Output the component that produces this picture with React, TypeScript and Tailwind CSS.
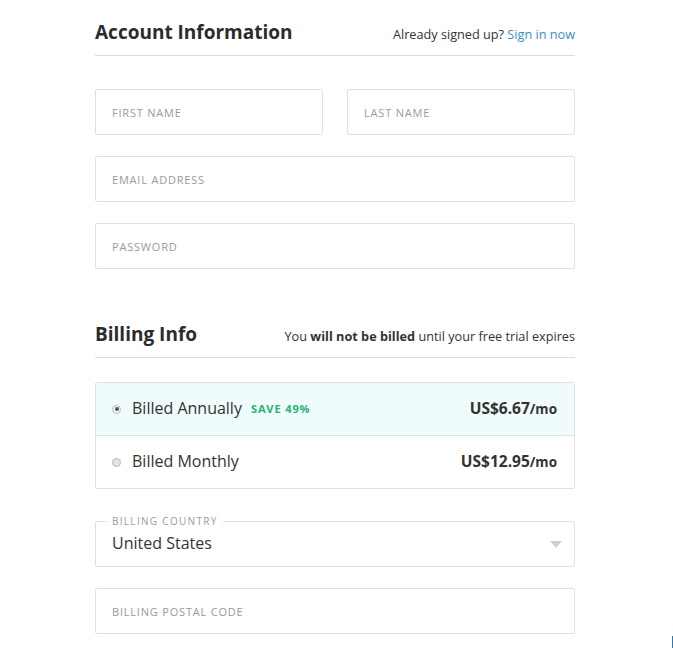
import React from "react";

const font = { fontFamily: '"Open Sans", "Liberation Sans", sans-serif' };

function Field({ label, className = "" }: { label: string; className?: string }) {
  return (
    <div className={`h-[46px] border border-[#e1e1e1] rounded-[2px] flex items-center pl-[16px] pt-[2px] ${className}`}>
      <span className="text-[11px] tracking-[0.8px] text-[#9a9a9a] uppercase">{label}</span>
    </div>
  );
}

function PlanRow({ label, price, save, selected }: { label: string; price: string; save?: string; selected?: boolean }) {
  return (
    <div className={`flex items-center pl-[16px] pr-[17px] ${selected ? "h-[52px] bg-[#f0fbfc]" : "h-[53px] bg-white border-t border-[#e1e1e1]"}`}>
      <span className={`w-[9px] h-[9px] rounded-full border border-[#b8b8b8] flex items-center justify-center ${selected ? "bg-[#f4f4f4]" : "bg-[#e3e3e3]"}`}>
        {selected && <span className="w-[4px] h-[4px] rounded-full bg-[#555]" />}
      </span>
      <span className="ml-[11px] text-[16px] text-[#333] -mt-[2px]">{label}</span>
      {save && <span className="ml-[9px] text-[11px] font-bold tracking-[0.9px] text-[#22b573]">{save}</span>}
      <span className="ml-auto text-[15.5px] font-bold text-[#333]">
        {price}
        <span className="text-[13.5px]">/mo</span>
      </span>
    </div>
  );
}

export default function App() {
  return (
    <div className="relative w-[673px] h-[648px] bg-white overflow-hidden" style={font}>
      <div className="w-[480px] ml-[95px] pt-[18px]">
        <div className="flex justify-between items-baseline pb-[9px] border-b border-[#dcdcdc]">
          <h1 className="text-[19px] leading-[28px] font-bold text-[#2b2b2b]">Account Information</h1>
          <div className="text-[12.7px] text-[#333]">
            Already signed up? <a className="text-[#3a8fc7]">Sign in now</a>
          </div>
        </div>

        <div className="mt-[33px] flex flex-col gap-[21px]">
          <div className="flex gap-[24px]">
            <Field label="First Name" className="flex-1" />
            <Field label="Last Name" className="flex-1" />
          </div>
          <Field label="Email Address" />
          <Field label="Password" />
        </div>

        <div className="mt-[51px] flex justify-between items-baseline pb-[9px] border-b border-[#dcdcdc]">
          <h2 className="text-[19px] leading-[28px] font-bold text-[#2b2b2b]">Billing Info</h2>
          <div className="text-[12.7px] text-[#333]">
            You <b>will not be billed</b> until your free trial expires
          </div>
        </div>

        <div className="mt-[24px] border border-[#e1e1e1] rounded-[2px] overflow-hidden">
          <PlanRow label="Billed Annually" save="SAVE 49%" price="US$6.67" selected />
          <PlanRow label="Billed Monthly" price="US$12.95" />
        </div>

        <fieldset className="mt-[25px] h-[53px] border border-[#e1e1e1] rounded-[2px] pl-[16px] pr-[12px] pt-[3px] flex items-start">
          <legend className="ml-[-5px] px-[5px] text-[10px] leading-[14px] tracking-[1.3px] text-[#9a9a9a] uppercase">Billing Country</legend>
          <span className="text-[16px] leading-[24px] text-[#333]">United States</span>
          <span className="ml-auto mt-[10px] w-0 h-0 border-l-[6px] border-r-[6px] border-t-[7px] border-l-transparent border-r-transparent border-t-[#cfcfcf]" />
        </fieldset>

        <Field label="Billing Postal Code" className="mt-[21px]" />
      </div>
      <div className="absolute left-[672px] top-[636px] w-[1px] h-[12px] bg-[#2a7ab8]" />
    </div>
  );
}
